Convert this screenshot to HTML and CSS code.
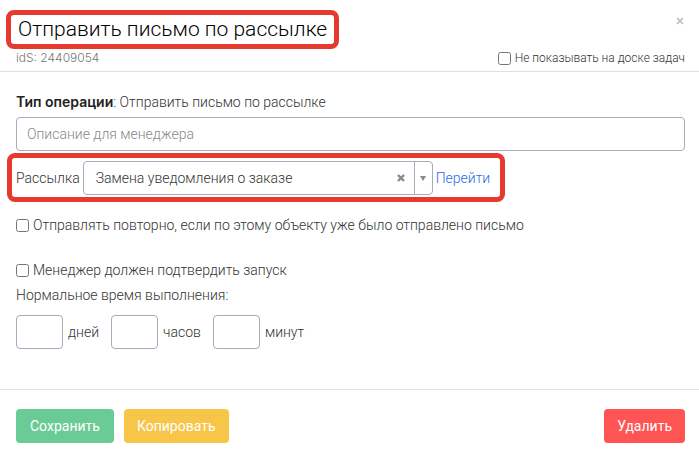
FILE: index.html
```html
<!DOCTYPE html>
<html lang="ru">
<head>
<meta charset="utf-8">
<meta name="viewport" content="width=device-width, initial-scale=1">
<title>Отправить письмо по рассылке</title>
<link rel="stylesheet" href="styles.css">
</head>
<body>
<form class="dialog">
  <header class="dialog-header">
    <div class="header-row">
      <h1 class="title highlight">Отправить письмо по рассылке</h1>
      <button class="close" type="button" aria-label="Закрыть"><svg width="8" height="8" viewBox="0 0 8 8"><path d="M1 1l6 6M7 1L1 7" fill="none" stroke="currentColor" stroke-width="1.6"/></svg></button>
    </div>
    <div class="header-row meta">
      <span class="ident">idS: 24409054</span>
      <label class="check"><input type="checkbox">Не показывать на доске задач</label>
    </div>
  </header>
  <main class="dialog-body">
    <p class="line"><b>Тип операции</b>: Отправить письмо по рассылке</p>
    <input class="field description" type="text" placeholder="Описание для менеджера" aria-label="Описание для менеджера">
    <div class="mailing highlight">
      <label for="mailing">Рассылка</label>
      <div class="picker">
        <select class="field" id="mailing"><option>Замена уведомления о заказе</option></select>
        <button class="clear" type="button" aria-label="Очистить"><svg width="8" height="8" viewBox="0 0 8 8"><path d="M1 1l6 6M7 1L1 7" fill="none" stroke="currentColor" stroke-width="2.4"/></svg></button>
        <span class="arrow"><svg width="6" height="5" viewBox="0 0 6 5"><path d="M0 0h6L3 5z" fill="currentColor"/></svg></span>
      </div>
      <a href="#mailing">Перейти</a>
    </div>
    <label class="check repeat"><input type="checkbox">Отправлять повторно, если по этому объекту уже было отправлено письмо</label>
    <label class="check confirm"><input type="checkbox">Менеджер должен подтвердить запуск</label>
    <p class="line duration-title">Нормальное время выполнения:</p>
    <div class="duration">
      <label><input class="field" type="text">дней</label>
      <label><input class="field" type="text">часов</label>
      <label><input class="field" type="text">минут</label>
    </div>
  </main>
  <footer class="dialog-footer">
    <button class="button save" type="submit">Сохранить</button>
    <button class="button copy" type="button">Копировать</button>
    <button class="button delete" type="button">Удалить</button>
  </footer>
</form>
</body>
</html>
```
FILE: styles.css
```css
* { box-sizing: border-box; }

body {
  margin: 0;
  background: #fff;
  color: #333;
  font: 300 14px/20px Roboto, "Open Sans", sans-serif;
}

h1, p { margin: 0; }

button, input, select { font: inherit; color: inherit; }

button { cursor: pointer; }

svg { display: block; }

.dialog-header {
  padding: 14px 14px 3px 16px;
  border-bottom: 1px solid #e0e0e0;
}

.header-row {
  display: flex;
  justify-content: space-between;
  align-items: flex-start;
}

.highlight { position: relative; }

.highlight::after {
  content: "";
  position: absolute;
  inset: -4px -12px -5px -10px;
  border: 5px solid #e63a31;
  border-radius: 8px;
  pointer-events: none;
}

.title {
  padding-left: 2px;
  color: #000;
  font-size: 21px;
  font-weight: 300;
  line-height: 30px;
}

.close, .clear {
  padding: 2px;
  border: 0;
  background: none;
}

.close { color: #bbb; padding: 3px 1px; }

.meta {
  align-items: center;
  padding-top: 4px;
  font-size: 12px;
}

.ident { color: #777; font-family: Inter, sans-serif; }

.check {
  display: flex;
  align-items: center;
  gap: 4px;
}

.check input {
  width: 13px;
  height: 13px;
  margin: 0;
}

.dialog-body { padding: 20px 14px 40px 16px; }

.field {
  height: 34px;
  padding: 0 10px;
  border: 1px solid #aaaabb;
  border-radius: 4px;
  background: #fff;
}

.line b { color: #222; font-family: Inter, sans-serif; font-weight: 600; }

.description {
  display: block;
  width: 100%;
  margin-top: 5px;
}

.description::placeholder { color: #888; opacity: 1; }

.mailing {
  display: flex;
  align-items: center;
  gap: 3px;
  width: fit-content;
  margin-top: 10px;
}

.mailing::after { inset: -8px -15px -7px -9px; }

.mailing a { color: #1f6be5; text-decoration: none; }

.picker { position: relative; width: 350px; }

.picker select {
  appearance: none;
  width: 100%;
  padding: 0 50px 0 12px;
}

.clear {
  position: absolute;
  top: 11px;
  right: 26px;
  color: #888;
}

.arrow {
  position: absolute;
  inset: 1px 1px 1px auto;
  display: flex;
  align-items: center;
  justify-content: center;
  width: 18px;
  border-left: 1px solid #aaaabb;
  color: #888;
  pointer-events: none;
}

.repeat { margin-top: 20px; }
.confirm { margin-top: 25px; }
.duration-title { margin-top: 5px; }

.duration {
  display: flex;
  gap: 12px;
  margin-top: 10px;
}

.duration label {
  display: flex;
  align-items: center;
  gap: 5px;
}

.duration .field { width: 47px; }

.dialog-footer {
  display: flex;
  gap: 10px;
  padding: 19px 14px 12px 16px;
  border-top: 1px solid #e0e0e0;
}

.button {
  height: 34px;
  padding: 0 13px;
  border: 0;
  border-radius: 4px;
  color: #fff;
  font-weight: 400;
}

.save { padding: 0 14px; background: #6bcb96; }
.copy { background: #f7c548; }
.delete { margin-left: auto; background: #ff5454; }
```
